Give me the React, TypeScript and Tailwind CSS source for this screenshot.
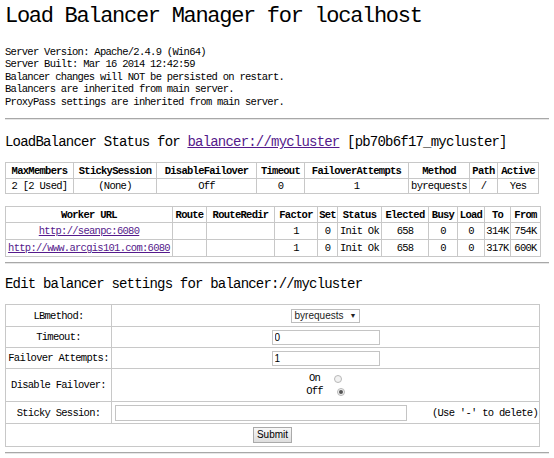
import React from 'react';

const mono = { fontFamily: '"Liberation Mono", "DejaVu Sans Mono", monospace' };
const sans = { fontFamily: '"Liberation Sans", Arial, sans-serif' };

const Rule = () => <div className="h-[2px] border-t border-[#a8a8a8] border-b border-b-[#e6e6e6]" />;

const th = 'border border-[#c8c8c8] px-[1px] font-bold text-center whitespace-nowrap';
const td = 'border border-[#c8c8c8] px-[1px] text-center whitespace-nowrap';

const Radio = ({ checked }: { checked?: boolean }) => (
    <span className="inline-flex items-center justify-center w-[8px] h-[8px] rounded-full border border-[#b8b8b8] bg-[#f2f2f2] ml-[14px]">
        {checked && <span className="w-[4px] h-[4px] rounded-full bg-[#555]" />}
    </span>
);

export default function App() {
    const workers = [
        { url: 'http://seanpc:6080', to: '314K', from: '754K' },
        { url: 'http://www.arcgis101.com:6080', to: '317K', from: '600K' },
    ];

    return (
        <div className="w-[554px] h-[458px] bg-white text-black px-[5px] overflow-hidden text-[10.5px] tracking-[-0.72px]" style={mono}>
            <h1 className="pt-[5px] text-[22px] tracking-[-1.3px] leading-[24px] font-normal">Load Balancer Manager for localhost</h1>
            <div className="mt-[17px] leading-[12.4px]">
                <div>Server Version: Apache/2.4.9 (Win64)</div>
                <div>Server Built: Mar 16 2014 12:42:59</div>
                <div>Balancer changes will NOT be persisted on restart.</div>
                <div>Balancers are inherited from main server.</div>
                <div>ProxyPass settings are inherited from main server.</div>
            </div>
            <div className="mt-[10px]"><Rule /></div>

            <h3 className="mt-[14px] text-[14px] tracking-[-0.8px] leading-[16px]">
                LoadBalancer Status for <span className="text-[#551a8b] underline">balancer://mycluster</span> [pb70b6f17_mycluster]
            </h3>

            <table className="mt-[12px] border-collapse border border-[#a0a0a0] w-[534px] leading-[12px]">
                <tbody>
                    <tr className="h-[16px]">
                        <th className={th + ' w-[68px]'}>MaxMembers</th>
                        <th className={th + ' w-[83px]'}>StickySession</th>
                        <th className={th + ' w-[100px]'}>DisableFailover</th>
                        <th className={th + ' w-[48px]'}>Timeout</th>
                        <th className={th + ' w-[104px]'}>FailoverAttempts</th>
                        <th className={th + ' w-[61px]'}>Method</th>
                        <th className={th + ' w-[28px]'}>Path</th>
                        <th className={th}>Active</th>
                    </tr>
                    <tr className="h-[15px]">
                        <td className={td}>2 [2 Used]</td>
                        <td className={td}>(None)</td>
                        <td className={td}>Off</td>
                        <td className={td}>0</td>
                        <td className={td}>1</td>
                        <td className={td}>byrequests</td>
                        <td className={td}>/</td>
                        <td className={td}>Yes</td>
                    </tr>
                </tbody>
            </table>

            <table className="mt-[12px] border-collapse border border-[#a0a0a0] w-[536px] leading-[12px]">
                <tbody>
                    <tr className="h-[16px]">
                        <th className={th + ' w-[167px]'}>Worker URL</th>
                        <th className={th + ' w-[34px]'}>Route</th>
                        <th className={th + ' w-[68px]'}>RouteRedir</th>
                        <th className={th + ' w-[43px]'}>Factor</th>
                        <th className={th + ' w-[20px]'}>Set</th>
                        <th className={th + ' w-[44px]'}>Status</th>
                        <th className={th + ' w-[47px]'}>Elected</th>
                        <th className={th + ' w-[29px]'}>Busy</th>
                        <th className={th + ' w-[27px]'}>Load</th>
                        <th className={th + ' w-[26px]'}>To</th>
                        <th className={th}>From</th>
                    </tr>
                    {workers.map((w) => (
                        <tr key={w.url} className="h-[17px]">
                            <td className={td}><span className="text-[#551a8b] underline">{w.url}</span></td>
                            <td className={td}></td>
                            <td className={td}></td>
                            <td className={td}>1</td>
                            <td className={td}>0</td>
                            <td className={td}>Init Ok</td>
                            <td className={td}>658</td>
                            <td className={td}>0</td>
                            <td className={td}>0</td>
                            <td className={td}>{w.to}</td>
                            <td className={td}>{w.from}</td>
                        </tr>
                    ))}
                </tbody>
            </table>

            <div className="mt-[5px]"><Rule /></div>

            <h3 className="mt-[12px] text-[14px] tracking-[-0.8px] leading-[16px]">Edit balancer settings for balancer://mycluster</h3>

            <table className="mt-[12px] border-collapse border border-[#a0a0a0] w-[535px] leading-[12px]">
                <tbody>
                    <tr className="h-[22px]">
                        <td className={td + ' w-[106px]'}>LBmethod:</td>
                        <td className={td}>
                            <span className="inline-flex items-center gap-[6px] h-[14px] px-[3px] border border-[#bdbdbd] bg-white text-[10px] tracking-normal text-[#222] align-middle" style={sans}>
                                byrequests <span className="text-[7px]">▼</span>
                            </span>
                        </td>
                    </tr>
                    <tr className="h-[21px]">
                        <td className={td}>Timeout:</td>
                        <td className={td}>
                            <input readOnly value="0" className="w-[108px] h-[15px] border border-[#c4c4c4] px-[2px] text-[10px] tracking-normal align-middle" style={sans} />
                        </td>
                    </tr>
                    <tr className="h-[21px]">
                        <td className={td}>Failover Attempts:</td>
                        <td className={td}>
                            <input readOnly value="1" className="w-[108px] h-[15px] border border-[#c4c4c4] px-[2px] text-[10px] tracking-normal align-middle" style={sans} />
                        </td>
                    </tr>
                    <tr className="h-[33px]">
                        <td className={td}>Disable Failover:</td>
                        <td className={td}>
                            <div className="flex flex-col items-center leading-[13px]">
                                <div className="flex items-center">On<Radio /></div>
                                <div className="flex items-center">Off<Radio checked /></div>
                            </div>
                        </td>
                    </tr>
                    <tr className="h-[22px]">
                        <td className={td}>Sticky Session:</td>
                        <td className={td + ' text-left pl-[3px]'}>
                            <div className="flex items-center justify-between">
                                <input readOnly value="" className="w-[292px] h-[16px] border border-[#c4c4c4]" />
                                <span>(Use '-' to delete)</span>
                            </div>
                        </td>
                    </tr>
                    <tr className="h-[23px]">
                        <td className={td} colSpan={2}>
                            <button className="h-[16px] px-[3px] border border-[#aaa] bg-gradient-to-b from-[#f8f8f8] to-[#dedede] text-[10px] tracking-normal align-middle" style={sans}>Submit</button>
                        </td>
                    </tr>
                </tbody>
            </table>

            <div className="mt-[5px]"><Rule /></div>
        </div>
    );
}
